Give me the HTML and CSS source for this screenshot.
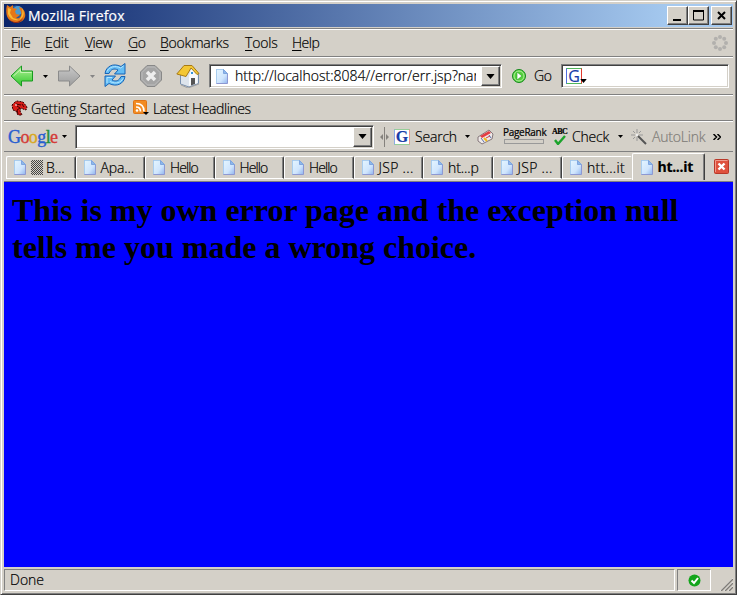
FILE: index.html
```html
<!DOCTYPE html>
<html lang="en">
<head>
<meta charset="utf-8">
<title>Mozilla Firefox</title>
<link rel="stylesheet" href="styles.css">
</head>
<body>
<svg class="defs" width="0" height="0">
  <defs>
    <linearGradient id="paper" x1="0" y1="0" x2="1" y2="1"><stop offset="0" stop-color="#e4f5ff"/><stop offset=".6" stop-color="#cfe5fd"/><stop offset="1" stop-color="#8fb4ee"/></linearGradient>
    <linearGradient id="green" x1="0" y1="0" x2="0" y2="1"><stop offset="0" stop-color="#b5f39a"/><stop offset="1" stop-color="#2fc62b"/></linearGradient>
    <linearGradient id="grey" x1="0" y1="0" x2="0" y2="1"><stop offset="0" stop-color="#c9c9c9"/><stop offset="1" stop-color="#9c9c9c"/></linearGradient>
    <symbol id="page" viewBox="0 0 12 15"><path d="M.5.5h7l4 4v10H.5z" fill="url(#paper)" stroke="#8d98d2"/><path d="M.5 14V.5h7" fill="none" stroke="#a9cdee"/><path d="M7.500.5v4h4z" fill="#8db8ec" stroke="#7fa6df"/></symbol>
    <symbol id="down" viewBox="0 0 5 3"><path d="M0 0h5L2.500 3z"/></symbol>
  </defs>
</svg>
<div class="window">
  <header class="title">
    <svg class="fox" width="20" height="20" viewBox="0 0 20 20"><circle cx="10" cy="9.500" r="8" fill="#285ba0"/><circle cx="12" cy="6.500" r="4.500" fill="#4b9bd0"/><path d="M1 1l3 2 3-2v3l4 1-2 2 1 3 4 1-4 3c4 1 6-2 5-6l-2-5c5 1 7 6 6 10-2 6-9 7-14 4C1 15-1 9 1 1z" fill="#e57718"/><path d="M2 4l3 1-1 4 3 5 6 2c-5 1-9-1-11-6zM16 4c3 4 2 10-3 12 3-4 4-7 3-12z" fill="#f8bb35"/><path d="M3 15c4 4 10 4 14-1-2 6-10 7-14 1z" fill="#982b13"/></svg>
    <span class="caption">Mozilla Firefox</span>
    <span class="winbtns">
      <i class="wb"><svg width="17" height="15"><path d="M4 11h8v2H4z"/></svg></i><i class="wb"><svg width="17" height="15"><path d="M3.500 3h10v9h-10z" fill="none" stroke="#000"/><path d="M3 2h11v2H3z"/></svg></i><i class="wb last"><svg width="17" height="15"><path d="M5 4l7 7M12 4l-7 7" stroke="#000" stroke-width="2"/></svg></i>
    </span>
  </header>
  <nav class="menu">
    <span class="m1"><u>F</u>ile</span><span class="m2"><u>E</u>dit</span><span class="m3"><u>V</u>iew</span><span class="m4"><u>G</u>o</span><span class="m5"><u>B</u>ookmarks</span><span class="m6"><u>T</u>ools</span><span class="m7"><u>H</u>elp</span>
    <svg class="throbber" width="18" height="18" fill="#b2b0ad"><circle cx="9" cy="3" r="2"/><circle cx="13.200" cy="4.800" r="2"/><circle cx="15" cy="9" r="2"/><circle cx="13.200" cy="13.200" r="2"/><circle cx="9" cy="15" r="2"/><circle cx="4.800" cy="13.200" r="2"/><circle cx="3" cy="9" r="2"/><circle cx="4.800" cy="4.800" r="2"/></svg>
  </nav>
  <div class="navbar">
    <svg class="back" width="24" height="22"><path d="M1 11L11.500 1v5H22.500v10H11.500v5z" fill="url(#green)" stroke="#169a1f" stroke-linejoin="round"/><path d="M3.500 11l7-6.500V7.500h11" fill="none" stroke="#c5f5b3"/></svg>
    <svg class="dd d1" width="5" height="3"><use href="#down"/></svg>
    <svg class="fwd" width="24" height="22"><path d="M23 11L12.500 1v5H1.500v10h11v5z" fill="url(#grey)" stroke="#8b8b8b" stroke-linejoin="round"/></svg>
    <svg class="dd d2" width="5" height="3" fill="#858585"><use href="#down"/></svg>
    <svg class="reload" width="24" height="24" viewBox="0 0 24 24"><g fill="#64bdf5" stroke="#1763b5" stroke-linejoin="round"><path d="M2 10.500C3 3.500 10-.5 18 3.500l4-3v10.500H11.500l3.500-4c-4-2-7-1-9 3.500z"/><path d="M22 13.500c-1 7-8 11-16 7l-4 3V13h10.500l-3.500 4c4 2 7 1 9-3.500z"/></g><path d="M4 8.500C6 4 12 2 17.500 5l3-2M4 20v-5.500h5M7 18.500c6 3 11 1 13-3" fill="none" stroke="#b3e5ff"/></svg>
    <svg class="stop" width="22" height="22"><path d="M7 .5h8L21.500 7v8L15 21.500H7L.5 15V7z" fill="#a5a5a5" stroke="#888"/><path d="M7.500 2h7L20 7.500v7L14.500 20h-7L2 14.500v-7z" fill="none" stroke="#bdbdbd"/><path d="M7 7l8 8M15 7l-8 8" stroke="#eee" stroke-width="3.500"/></svg>
    <svg class="home" width="24" height="24"><path d="M4.500 9v11l8.500 3 9.500-3.500V10l-7-7z" fill="#dde4ec" stroke="#7990ae"/><path d="M13 12v10l8.500-3V9L16 3z" fill="#f8fafc"/><path d="M8 1.500h8l7 8-2 1-6-6.500-5 8.500L.8 10z" fill="#f3c735" stroke="#a77a16"/><path d="M15 14h4v6l-4 1.500z" fill="#555"/><path d="M15 8h2v2h-2z" fill="#3694da"/><path d="M5 21l7 3 11-4" fill="none" stroke="#a0a0a0"/></svg>
    <div class="field url"><svg class="pg" width="12" height="15"><use href="#page"/></svg><span class="address">http://localhost:8084//error/err.jsp?nam</span><i class="combo"><svg width="9" height="5" viewBox="0 0 5 3"><use href="#down"/></svg></i></div>
    <svg class="go" width="16" height="16"><circle cx="8" cy="8" r="6.500" fill="#53cf3c" stroke="#16891e"/><circle cx="8" cy="8" r="5" fill="none" stroke="#b2ef9d"/><path d="M6 4l5 4-5 4z" fill="#fff" stroke="#249e20" stroke-width=".6"/></svg>
    <span class="gotext">Go</span>
    <div class="field search"><span class="gbox">G</span><svg class="gd" width="7" height="4" viewBox="0 0 5 3"><use href="#down"/></svg></div>
  </div>
  <div class="bookmarks">
    <svg class="dino" width="17" height="16"><path d="M1 5l3-3 2-1 6 1 4 5-1 3-3-1-2-1-1 3 2 4H7L5 11l-3-1z" fill="#d91d18" stroke="#300" stroke-dasharray="2 1"/><path d="M5 4l5 1M6 6l3 2-3 2 1 4M11 4l2 3" fill="none" stroke="#400"/><path d="M4 5h2" stroke="#fff"/></svg>
    <span class="bk1">Getting Started</span>
    <svg class="rss" width="17" height="16"><rect x=".5" y=".5" width="13" height="13" rx="1" fill="#f28b22" stroke="#df7416"/><path d="M3 3.500c5 0 8 3 8 8M3 7c3 0 4.500 1.500 4.500 4.500" fill="none" stroke="#fff" stroke-width="1.700"/><circle cx="4" cy="10.500" r="1.300" fill="#fff"/><path d="M10 12h6l-3 3z"/></svg>
    <span class="bk2">Latest Headlines</span>
  </div>
  <div class="google">
    <span class="logo"><b class="bl">G</b><b class="re">o</b><b class="ye">o</b><b class="bl">g</b><b class="gr">l</b><b class="re">e</b></span>
    <svg class="dd g1" width="5" height="3"><use href="#down"/></svg>
    <div class="field query"><i class="combo"><svg width="9" height="5" viewBox="0 0 5 3"><use href="#down"/></svg></i></div>
    <svg class="split" width="9" height="20"><path d="M4 0h1v20H4zM0 10l3-3v6zM9 10L6 7v6z" fill="#85827d"/></svg>
    <span class="gbox g2">G</span>
    <span class="t-search">Search</span>
    <svg class="dd g3" width="5" height="3"><use href="#down"/></svg>
    <svg class="news" width="17" height="16"><path d="M1 8l11-7 4 4-1 5-10 5-4-3z" fill="#eee9e8" stroke="#85777b"/><path d="M3 7l9-5 2 2-9 5z" fill="#e33d42"/><path d="M7 9l3 3" stroke="#efb91a" stroke-width="2"/><path d="M4 9l3 4M12 6l2 3" stroke="#596fac"/><path d="M9 9l4-2" stroke="#d43d44"/></svg>
    <span class="rank"><span>PageRank</span><i></i></span>
    <span class="abc"><span>ABC</span><svg width="12" height="10"><path d="M1 5l3 4 7-8" fill="none" stroke="#1ba32b" stroke-width="2.400"/></svg></span>
    <span class="t-check">Check</span>
    <svg class="dd g4" width="5" height="3"><use href="#down"/></svg>
    <svg class="wand" width="16" height="16"><path d="M7 7l8 8" stroke="#555" stroke-width="2"/><path d="M6 0v4M6 8v4M0 6h4M8 6h4M2 2l2 2M8 4l2-2M2 10l2-2" stroke="#999"/><path d="M5 5h2v2H5z" fill="#eee"/></svg>
    <span class="t-auto">AutoLink</span><svg class="more" width="8" height="6"><path d="M.5 0l3 3-3 3M4.500 0l3 3-3 3" fill="none" stroke="#000" stroke-width="1.500"/></svg>
  </div>
  <div class="tabs">
    <span class="tab"><svg width="12" height="15"><use href="#page"/></svg><i class="hatch"></i><span>B...</span></span><span class="tab"><svg width="12" height="15"><use href="#page"/></svg><span>Apa...</span></span><span class="tab hello"><svg width="12" height="15"><use href="#page"/></svg><span>Hello</span></span><span class="tab hello"><svg width="12" height="15"><use href="#page"/></svg><span>Hello</span></span><span class="tab hello"><svg width="12" height="15"><use href="#page"/></svg><span>Hello</span></span><span class="tab jsp"><svg width="12" height="15"><use href="#page"/></svg><span>JSP ...</span></span><span class="tab"><svg width="12" height="15"><use href="#page"/></svg><span>ht...p</span></span><span class="tab jsp"><svg width="12" height="15"><use href="#page"/></svg><span>JSP ...</span></span><span class="tab jsp before"><svg width="12" height="15"><use href="#page"/></svg><span>htt...it</span></span><span class="tab active"><svg width="12" height="15"><use href="#page"/></svg><span>ht...it</span></span>
    <svg class="close" width="15" height="15"><rect x=".5" y=".5" width="14" height="14" rx="1" fill="#df513d" stroke="#b83829"/><path d="M1.500 13V1.500h12" fill="none" stroke="#f09a8c"/><path d="M4.500 4.500l6 6M10.500 4.500l-6 6" stroke="#fff" stroke-width="2.400"/></svg>
  </div>
  <main class="page"><h1>This is my own error page and the exception null tells me you made a wrong choice.</h1></main>
  <footer class="status">
    <span class="panel done">Done</span><span class="panel ok"><svg width="13" height="13"><circle cx="6.500" cy="6.500" r="6" fill="#13a51b"/><path d="M3.500 6.500l2.500 2.500 4-5" fill="none" stroke="#fff" stroke-width="2"/></svg></span>
    <svg class="grip" width="14" height="14"><path d="M1 14L14 1M5 14l9-9M9 14l5-5" stroke="#fff"/><path d="M2 14L14 2M6 14l8-8M10 14l4-4" stroke="#807d78" stroke-width="1.500"/></svg>
  </footer>
</div>
</body>
</html>
```
FILE: styles.css
```css
* { box-sizing: border-box; }
body { margin: 0; width: 737px; height: 595px; overflow: hidden; font: 14px/18px "Open Sans", sans-serif; font-weight: 300; color: #000; -webkit-text-stroke: .2px; }
svg { display: block; flex: none; }
i { font-style: normal; flex: none; }
.defs { position: absolute; }
.window { width: 737px; height: 595px; background: #d4d0c8; display: flex; flex-direction: column; border: 1px solid #d4d0c8; border-right-color: #404040; border-bottom-color: #404040; box-shadow: inset 1px 1px #fff, inset -1px -1px #808080; padding: 3px 3px 0 3px; }
.window > * { flex: none; display: flex; align-items: center; white-space: nowrap; }
.window span { flex: none; }

.title { height: 23px; background: linear-gradient(90deg, #0a246a, #a6caf0 92%); color: #fff; }
.fox { margin-left: 2px; margin-top: -3px; }
.caption { margin-left: 2px; width: 110px; font-weight: 400; letter-spacing: .15px; }
.winbtns { margin-left: auto; margin-right: 1px; display: flex; }
.wb { width: 21px; height: 19px; background: #d4d0c8; border: 1px solid #fff; border-right-color: #404040; border-bottom-color: #404040; box-shadow: inset -1px -1px #808080; padding: 1px; }
.wb.last { margin-left: 2px; }

.menu, .navbar, .bookmarks { border-top: 1px solid #fff; border-bottom: 1px solid #808080; }
.menu { height: 28px; margin-top: 2px; box-shadow: 0 -1px #808080; }
.menu u { text-underline-offset: 2px; text-decoration-thickness: 1px; }
.m1 { width: 34px; margin-left: 7px; letter-spacing: -.5px; }
.m2 { width: 40px; letter-spacing: -.1px; }
.m3 { width: 43px; letter-spacing: -.5px; }
.m4 { width: 32px; letter-spacing: -.5px; }
.m5 { width: 85px; letter-spacing: -.2px; }
.m6 { width: 47px; letter-spacing: -.2px; }
.m7 { letter-spacing: -.5px; }
.throbber { margin-left: auto; margin-right: 4px; }

.navbar { height: 38px; }
.back { margin-left: 6px; }
.d1 { margin-left: 9px; }
.fwd { margin-left: 9px; }
.d2 { margin-left: 9px; }
.reload { margin-left: 8px; margin-top: -2px; }
.stop { margin-left: 13px; }
.home { margin-left: 14px; }
.field { flex: none; height: 24px; background: #fff; border: 1px solid #808080; border-right-color: #fff; border-bottom-color: #fff; box-shadow: inset 1px 1px #404040, inset -1px -1px #d4d0c8; display: flex; align-items: center; position: relative; }
.url { width: 293px; margin-left: 9px; }
.pg { margin-left: 6px; }
.address { width: 241px; margin-left: 7px; overflow: hidden; }
.combo { width: 19px; height: 20px; margin-left: auto; margin-right: 1px; background: #d4d0c8; border: 1px solid #fff; border-right-color: #404040; border-bottom-color: #404040; box-shadow: inset -1px -1px #808080; display: flex; align-items: center; justify-content: center; }
.go { margin-left: 9px; }
.gotext { width: 19px; margin-left: 7px; letter-spacing: -.4px; }
.search { width: 168px; margin-left: 8px; }
.gbox { width: 16px; height: 16px; border: 1px solid #52b65c; border-left-color: #506de0; border-right-color: #e1382b; margin-left: 4px; color: #173ca8; font: 16px/14px "Open Sans", sans-serif; text-align: center; }
.gd { position: absolute; left: 18px; top: 14px; }

.bookmarks { height: 26px; }
.bookmarks span { padding-top: 1px; }
.dino { margin-left: 7px; }
.bk1 { margin-left: 3px; width: 102px; letter-spacing: -.1px; }
.rss { margin-left: 0; }
.bk2 { margin-left: 3px; letter-spacing: -.4px; }

.google { height: 31px; border-top: 1px solid #fff; border-bottom: 1px solid #808080; }
.logo { width: 48px; margin-left: 4px; font: 18px/20px "Liberation Serif", serif; letter-spacing: -.6px; }
.logo b { font-weight: 400; -webkit-text-stroke: .4px; }
.bl { color: #275ed0; } .re { color: #d33b38; } .ye { color: #d8a71b; } .gr { color: #22913e; }
.g1 { margin-left: 6px; }
.query { width: 299px; margin-left: 8px; }
.split { margin-left: 6px; }
.g2 { margin-left: 5px; background: #fff; border-color: #96ce98; border-left-color: #8caae8; border-right-color: #ec9790; font: bold 16px/14px "Liberation Serif", serif; }
.t-search { margin-left: 5px; width: 46px; letter-spacing: -.2px; }
.g3 { margin-left: 4px; }
.news { margin-left: 7px; }
.rank { width: 45px; margin-left: 9px; font: 10px/10px "Open Sans", sans-serif; letter-spacing: -.3px; }
.rank span { display: block; margin-top: -2px; }
.rank i { display: block; width: 40px; height: 5px; margin: 2px 0 0 1px; border: 1px solid #999; }
.abc { width: 17px; margin-left: 4px; font: bold 8px/8px "Liberation Serif", serif; letter-spacing: -.6px; }
.abc svg { margin: -1px 0 0 2px; }
.t-check { margin-left: 3px; width: 40px; letter-spacing: -.2px; }
.g4 { margin-left: 6px; }
.wand { margin-left: 8px; }
.t-auto { margin-left: 5px; width: 54px; color: #807d78; letter-spacing: -.2px; }
.more { margin-left: 7px; }

.tabs { height: 30px; padding-left: 2px; border-bottom: 1px solid #808080; }
.window > .tabs { align-items: flex-start; }
.tab { width: 69.500px; height: 23px; margin-top: 4px; padding-left: 7px; border: 1px solid #fff; border-right: 1px solid #404040; border-radius: 2px 2px 0 0; box-shadow: inset -1px 0 #808080; display: flex; align-items: center; }
.tab > span { margin-left: 5px; letter-spacing: -.1px; }
.hello > span { letter-spacing: -.9px; }
.jsp > span { letter-spacing: .3px; }
.before { border-right-color: #d4d0c8; box-shadow: none; }
.active { width: 73px; height: 27px; margin-top: 1px; padding-left: 8px; border-bottom: 0; font-weight: 700; }
.active > span { letter-spacing: -.3px; }
.hatch { width: 12px; height: 15px; margin-left: 5px; background: repeating-conic-gradient(#444 0 25%, #d4d0c8 0 50%) 0 0 / 2px 2px; }
.tab .hatch + span { margin-left: 3px; }
.close { margin: 7px 0 0 9px; }

.window > .page { display: block; height: 385px; background: #00f; padding: 10px 8px; white-space: normal; }
h1 { margin: 0; font: bold 32px/37px "Liberation Serif", serif; width: 700px; -webkit-text-stroke: 0; }

.status { height: 25px; padding-top: 1px; }
.panel { height: 22px; border: 1px solid #808080; border-right-color: #fff; border-bottom-color: #fff; display: flex; align-items: center; }
.done { width: 671px; padding-left: 5px; }
.ok { width: 34px; margin-left: 2px; justify-content: center; }
.grip { margin: 7px 0 0 8px; }
```
